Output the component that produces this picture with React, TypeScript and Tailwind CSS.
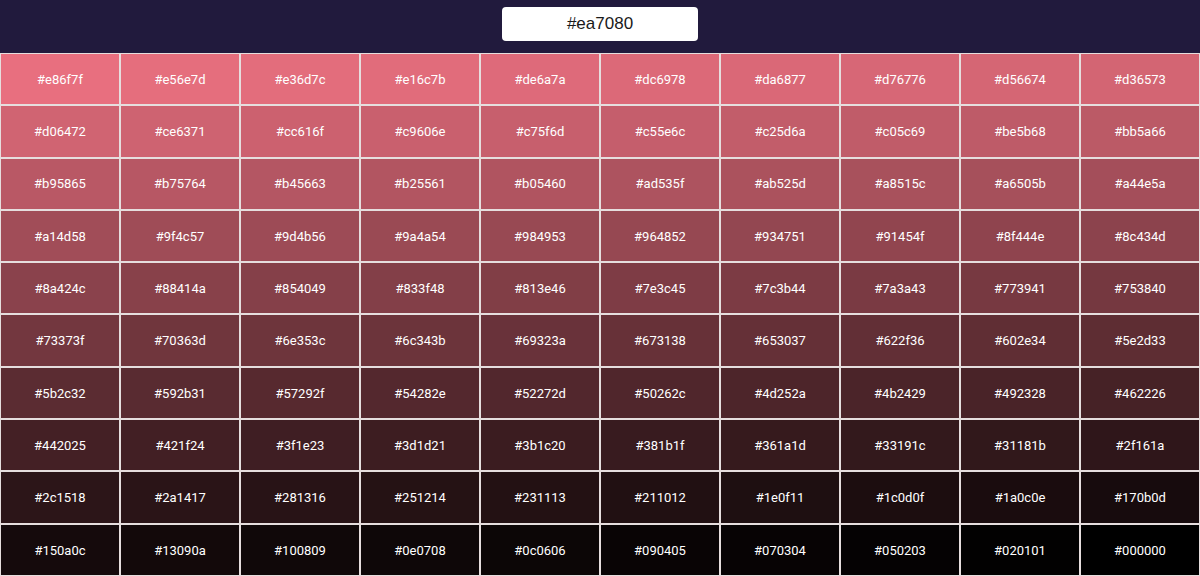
import React from "react";

const colors = [
  "#e86f7f","#e56e7d","#e36d7c","#e16c7b","#de6a7a","#dc6978","#da6877","#d76776","#d56674","#d36573",
  "#d06472","#ce6371","#cc616f","#c9606e","#c75f6d","#c55e6c","#c25d6a","#c05c69","#be5b68","#bb5a66",
  "#b95865","#b75764","#b45663","#b25561","#b05460","#ad535f","#ab525d","#a8515c","#a6505b","#a44e5a",
  "#a14d58","#9f4c57","#9d4b56","#9a4a54","#984953","#964852","#934751","#91454f","#8f444e","#8c434d",
  "#8a424c","#88414a","#854049","#833f48","#813e46","#7e3c45","#7c3b44","#7a3a43","#773941","#753840",
  "#73373f","#70363d","#6e353c","#6c343b","#69323a","#673138","#653037","#622f36","#602e34","#5e2d33",
  "#5b2c32","#592b31","#57292f","#54282e","#52272d","#50262c","#4d252a","#4b2429","#492328","#462226",
  "#442025","#421f24","#3f1e23","#3d1d21","#3b1c20","#381b1f","#361a1d","#33191c","#31181b","#2f161a",
  "#2c1518","#2a1417","#281316","#251214","#231113","#211012","#1e0f11","#1c0d0f","#1a0c0e","#170b0d",
  "#150a0c","#13090a","#100809","#0e0708","#0c0606","#090405","#070304","#050203","#020101","#000000",
];

export default function App() {
  return (
    <div className="w-[1200px] bg-[#211a3d] font-['Roboto','Liberation_Sans',sans-serif]">
      <div className="h-[53px] flex items-start justify-center pt-[7px]">
        <input
          readOnly
          value="#ea7080"
          className="w-[196px] h-[34px] rounded-[4px] bg-white text-center text-[17px] text-[#1a1a1a] outline-none font-['Liberation_Sans',Arial,sans-serif]"
        />
      </div>
      <div className="grid grid-cols-10">
        {colors.map((c) => (
          <div
            key={c}
            className="h-[52.3px] pt-px border border-[#e6dede] flex items-center justify-center text-white text-[13px]"
            style={{ backgroundColor: c }}
          >
            {c}
          </div>
        ))}
      </div>
    </div>
  );
}
